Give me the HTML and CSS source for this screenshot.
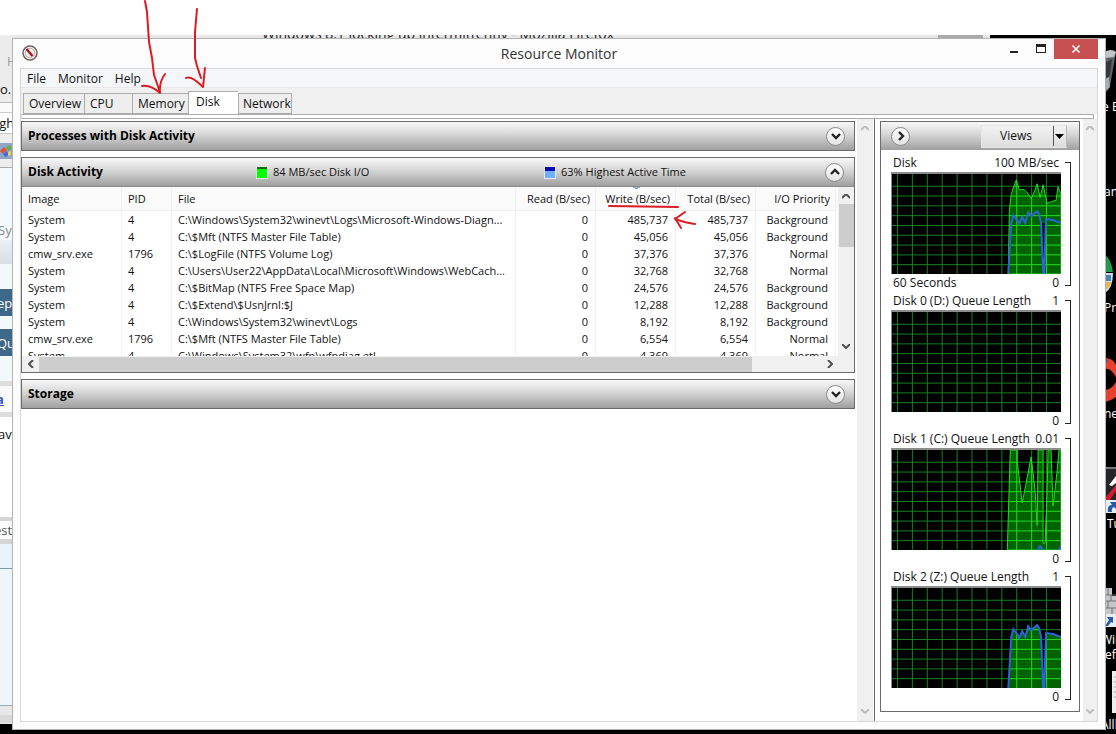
FILE: index.html
```html
<!DOCTYPE html>
<html lang="en">
<head>
<meta charset="utf-8">
<title>Resource Monitor</title>
<link rel="stylesheet" href="styles.css">
</head>
<body>
<svg class="defs" width="0" height="0" aria-hidden="true">
  <defs>
    <path id="area-io" d="M117 102L118 38 120 20 125 6 128 16 133 16 137 20 140 25 144 16 146 10 149 24 152 11 156 30 161 28 165 27 167 13 170 20V102Z"/>
    <path id="area-active" d="M117 102L120 50 122 42 126 47 128 51 131 44 134 50 137 39 140 43 142 41 146 38 148 41 150 50 151 102H153L155 46 162 47 170 50V102Z"/>
    <path id="line-active" d="M117 102L120 50 122 42 126 47 128 51 131 44 134 50 137 39 140 43 142 41 146 38 148 41 150 50 152 102 153 102 155 46 162 47 170 50"/>
    <path id="area-queue" d="M116 102L119 0H126V12L131 54 140 7 144 42 146 77 147 0H152V95H154L156 42 157 0H160L162 57 166 22 168 0H170V102Z"/>
    <path id="grid" d="M5.500 0V102M20.500 0V102M35.500 0V102M50.500 0V102M65.500 0V102M80.500 0V102M95.500 0V102M110.500 0V102M125.500 0V102M140.500 0V102M155.500 0V102M0 12.500H170M0 22.500H170M0 32.500H170M0 42.500H170M0 52.500H170M0 62.500H170M0 72.500H170M0 82.500H170M0 92.500H170"/>
    <clipPath id="clip-io"><use href="#area-io"/></clipPath>
    <clipPath id="clip-active"><use href="#area-active"/></clipPath>
    <clipPath id="clip-queue"><use href="#area-queue"/></clipPath>
    <path id="chev-down" d="M0 0L4 4 8 0"/>
    <path id="chev-up" d="M0 4L4 0 8 4"/>
  </defs>
</svg>
<div class="blank-strip"></div>
<div class="desktop">
  <div class="browser">
    <div class="browser-title">Windows 8.1 locking up intermittently - Mozilla Firefox</div>
    <div class="browser-button"></div>
    <div class="browser-edge">
      <div class="edge chrome"><span class="faint">H</span><span>o.</span></div>
      <div class="edge gap"></div>
      <div class="edge field">igh</div>
      <div class="edge tabs-row">
        <svg width="12" height="16"><rect width="12" height="16" fill="#91a5cb"/><path d="M0 8l4-4 3 3-4 4z" fill="#e0503c"/><path d="M6 4l4-2 2 4-4 2z" fill="#63b04d"/><path d="M3 11l4-3 2 4-4 2z" fill="#3f6fd2"/><path d="M8 9l3-1v4l-3 1z" fill="#f1cf4a"/></svg>
      </div>
      <div class="edge page-top">Sy</div>
      <div class="edge fade"></div>
      <div class="edge pale"></div>
      <div class="edge blue">ep</div>
      <div class="edge spacer"></div>
      <div class="edge blue">Qu</div>
      <div class="edge pale"></div>
      <div class="edge tool"><a href="#">a</a></div>
      <div class="edge editor">av</div>
      <div class="edge quote">est</div>
      <div class="edge box"></div>
      <div class="edge rest"></div>
      <div class="edge foot"></div>
    </div>
  </div>
  <svg class="desktop-icons" width="11" height="699" aria-hidden="true">
    <path d="M0 17Q6 14 11 17L5 51Q3 57 0 57Z" fill="#5d6167"/><path d="M0 17Q6 13 11 17L9 22 0 23Z" fill="#bfc4c9"/><path d="M0 28L7 24 5 40 0 46Z" fill="#34383e"/><path d="M0 44l4-2 1 10-5 4z" fill="#a8acb1"/>
    <path d="M0 220Q6 224 8 237H0Z" fill="#1f9c4b"/><path d="M0 238H8Q8 253 0 258Z" fill="#d7dde2"/><path d="M0 240h6v6H0z" fill="#4385b7"/><path d="M0 247h6q-1 6-6 8z" fill="#e8b34e"/>
    <path d="M0 323Q8 323 11 330V342Q5 332 0 334ZM0 355Q6 355 11 347V362Q6 366 0 367Z" fill="#e5412e"/><circle cx="1" cy="326" r="2" fill="#536070"/>
    <rect y="432" width="11" height="33" fill="#242529"/><path d="M0 432h11v2H0z" fill="#777"/><path d="M4 450L11 441V448L7 451Z" fill="#fff"/><path d="M0 463L11 450V456L5 465H0Z" fill="#d5182e"/>
    <rect y="465" width="11" height="13" fill="#e8edf4"/><path d="M3 477Q2 470 7 470L5 467H11V474L9 472Q6 473 7 477Z" fill="#225ba8"/>
    <path d="M0 553H7V561H11V579H0Z" fill="#c4c7cb"/><path d="M0 560H11M0 566H11M0 573H11M3 553V560M6 560V566M3 566V573M7 573V579" stroke="#6d7076" fill="none"/>
    <rect y="579" width="11" height="13" fill="#e8edf4"/><path d="M0 591L4 585 2 582H8V588L6 587 3 591Z" fill="#225ba8"/>
    <rect x="7" y="636" width="4" height="42" fill="#eee"/><path d="M9 642H11M9 647H11M9 652H11M9 657H11M9 662H11" stroke="#aaa"/>
    <g class="icon-label"><text x="-6" y="76">le E</text><text x="-1" y="161">an</text><text x="-1" y="277">Pro</text><text x="-1" y="383">ne</text><text x="2" y="493">Tu</text><text x="-4" y="609">Win</text><text x="0" y="624">ef</text><text x="-4" y="694">Alll</text></g>
  </svg>

  <main class="window">
    <header class="titlebar">
      <svg class="app-icon" width="16" height="16" viewBox="0 0 16 16"><circle cx="8" cy="8" r="7" fill="#fff" stroke="#6d625e" stroke-width="1.500"/><circle cx="8" cy="8" r="4.800" fill="#f4eded" stroke="#b9aaa7"/><path d="M4.500 4L10.500 11" stroke="#a41d25" stroke-width="2.500"/></svg>
      <h1>Resource Monitor</h1>
      <div class="window-controls">
        <button type="button" aria-label="Minimize"><svg width="10" height="10"><path d="M1 8H9" stroke="#222" stroke-width="2"/></svg></button>
        <button type="button" aria-label="Maximize"><svg width="10" height="10"><path d="M0 1.500H10" stroke="#222" stroke-width="3"/><rect x=".5" y=".5" width="9" height="8" fill="none" stroke="#222"/></svg></button>
        <button type="button" class="close" aria-label="Close"><svg width="10" height="10"><path d="M1.500 1.500L8.500 8.500M8.500 1.500L1.500 8.500" stroke="#fff" stroke-width="1.600"/></svg></button>
      </div>
    </header>
    <div class="client">
      <nav class="menubar"><button type="button">File</button><button type="button">Monitor</button><button type="button">Help</button></nav>
      <div class="tabbar" role="tablist">
        <button type="button" role="tab" class="tab w-overview">Overview</button>
        <button type="button" role="tab" class="tab w-cpu">CPU</button>
        <button type="button" role="tab" class="tab w-memory">Memory</button>
        <button type="button" role="tab" class="tab w-disk selected" aria-selected="true">Disk</button>
        <button type="button" role="tab" class="tab w-network">Network</button>
      </div>
      <div class="tab-edge"></div>
      <div class="panes">
        <section class="main-pane">
          <article class="panel">
            <div class="panel-head"><h2>Processes with Disk Activity</h2><button type="button" class="round" aria-label="Expand processes"><svg width="20" height="20"><use href="#chev-down" x="6" y="8"/></svg></button></div>
          </article>
          <article class="panel">
            <div class="panel-head with-legend">
              <h2>Disk Activity</h2>
              <span class="legend"><i class="swatch green"></i>84 MB/sec Disk I/O</span>
              <span class="legend"><i class="swatch navy"></i>63% Highest Active Time</span>
              <button type="button" class="round" aria-label="Collapse disk activity"><svg width="20" height="20"><use href="#chev-up" x="6" y="8"/></svg></button>
            </div>
            <div class="table-area">
              <div class="table-clip">
                <table>
                  <colgroup><col class="c-image"><col class="c-pid"><col><col class="c-num"><col class="c-num"><col class="c-num"><col class="c-num"></colgroup>
                  <thead><tr><th>Image</th><th>PID</th><th>File</th><th class="num">Read (B/sec)</th><th class="num sorted">Write (B/sec)</th><th class="num">Total (B/sec)</th><th class="num">I/O Priority</th></tr></thead>
                  <tbody>
                    <tr><td>System</td><td>4</td><td>C:\Windows\System32\winevt\Logs\Microsoft-Windows-Diagn...</td><td>0</td><td>485,737</td><td>485,737</td><td>Background</td></tr>
                    <tr><td>System</td><td>4</td><td>C:\$Mft (NTFS Master File Table)</td><td>0</td><td>45,056</td><td>45,056</td><td>Background</td></tr>
                    <tr><td>cmw_srv.exe</td><td>1796</td><td>C:\$LogFile (NTFS Volume Log)</td><td>0</td><td>37,376</td><td>37,376</td><td>Normal</td></tr>
                    <tr><td>System</td><td>4</td><td>C:\Users\User22\AppData\Local\Microsoft\Windows\WebCach...</td><td>0</td><td>32,768</td><td>32,768</td><td>Normal</td></tr>
                    <tr><td>System</td><td>4</td><td>C:\$BitMap (NTFS Free Space Map)</td><td>0</td><td>24,576</td><td>24,576</td><td>Background</td></tr>
                    <tr><td>System</td><td>4</td><td>C:\$Extend\$UsnJrnl:$J</td><td>0</td><td>12,288</td><td>12,288</td><td>Background</td></tr>
                    <tr><td>System</td><td>4</td><td>C:\Windows\System32\winevt\Logs</td><td>0</td><td>8,192</td><td>8,192</td><td>Background</td></tr>
                    <tr><td>cmw_srv.exe</td><td>1796</td><td>C:\$Mft (NTFS Master File Table)</td><td>0</td><td>6,554</td><td>6,554</td><td>Normal</td></tr>
                    <tr><td>System</td><td>4</td><td>C:\Windows\System32\wfp\wfpdiag.etl</td><td>0</td><td>4,369</td><td>4,369</td><td>Normal</td></tr>
                  </tbody>
                </table>
              </div>
              <div class="vscroll inner">
                <svg width="8" height="5"><use href="#chev-up"/></svg><i class="thumb"></i><svg width="8" height="5"><use href="#chev-down"/></svg>
              </div>
              <div class="hscroll">
                <svg width="6" height="8"><path d="M5 0L1 4 5 8"/></svg><div class="track"><i class="thumb"></i></div><svg width="6" height="8"><path d="M1 0L5 4 1 8"/></svg>
              </div>
            </div>
          </article>
          <article class="panel">
            <div class="panel-head"><h2>Storage</h2><button type="button" class="round" aria-label="Expand storage"><svg width="20" height="20"><use href="#chev-down" x="6" y="8"/></svg></button></div>
          </article>
        </section>
        <div class="vscroll idle"><svg width="8" height="5"><use href="#chev-up"/></svg><svg width="8" height="5"><use href="#chev-down"/></svg></div>
        <aside class="graph-pane">
          <div class="panel graphs">
            <div class="panel-head graph-head">
              <button type="button" class="round" aria-label="Hide graphs"><svg width="20" height="20"><path d="M8 6L12 10 8 14"/></svg></button>
              <button type="button" class="views"><span>Views</span><svg width="14" height="20"><path d="M1.500 0V20" stroke="#555"/><path d="M3 8H12L7.500 13Z" fill="#000"/></svg></button>
            </div>
            <div class="graph-list">
              <figure class="graph">
                <figcaption><span>Disk</span><span>100 MB/sec</span></figcaption>
                <svg class="plot" viewBox="0 0 170 102" preserveAspectRatio="none"><use href="#grid" class="grid"/><use href="#area-io" class="area"/><g clip-path="url(#clip-io)"><use href="#grid" class="grid lit"/></g><path d="M150 50L151 102H153L155 50Z" fill="#00210a"/><use href="#area-io" class="edge-line"/><use href="#line-active" class="active"/></svg>
                <div class="scale"><span>60 Seconds</span><span>0</span></div><i class="bracket"></i>
              </figure>
              <figure class="graph">
                <figcaption><span>Disk 0 (D:) Queue Length</span><span>1</span></figcaption>
                <svg class="plot" viewBox="0 0 170 102" preserveAspectRatio="none"><use href="#grid" class="grid"/></svg>
                <div class="scale"><span></span><span>0</span></div><i class="bracket"></i>
              </figure>
              <figure class="graph">
                <figcaption><span>Disk 1 (C:) Queue Length</span><span>0.01</span></figcaption>
                <svg class="plot" viewBox="0 0 170 102" preserveAspectRatio="none"><use href="#grid" class="grid"/><use href="#area-queue" class="area"/><g clip-path="url(#clip-queue)"><use href="#grid" class="grid lit"/></g><use href="#area-queue" class="edge-line"/><path class="active" d="M146 102L149 98 152 102M168 102L170 98"/></svg>
                <div class="scale"><span></span><span>0</span></div><i class="bracket"></i>
              </figure>
              <figure class="graph">
                <figcaption><span>Disk 2 (Z:) Queue Length</span><span>1</span></figcaption>
                <svg class="plot" viewBox="0 0 170 102" preserveAspectRatio="none"><use href="#grid" class="grid"/><use href="#area-active" class="area"/><g clip-path="url(#clip-active)"><use href="#grid" class="grid lit"/></g><use href="#line-active" class="active"/></svg>
                <div class="scale"><span></span><span>0</span></div><i class="bracket"></i>
              </figure>
            </div>
          </div>
          <div class="vscroll idle"><svg width="8" height="5"><use href="#chev-up"/></svg><svg width="8" height="5"><use href="#chev-down"/></svg></div>
        </aside>
      </div>
    </div>
  </main>
</div>
<svg class="annotations" width="720" height="240" aria-hidden="true">
  <path d="M145 1L147 12 149 42 152 58 154 75 160 92M142 86Q150 84 160 93Q159 82 165 74"/>
  <path d="M197 9L195 32 195 58 197 66 201 78M186 78Q191 75 203 87L205 68"/>
  <path d="M609 206L678 207M695 224Q686 223 675 219L685 212M675 218L681 228"/>
</svg>
</body>
</html>
```
FILE: styles.css
```css
* { box-sizing: border-box; }
body {
  margin: 0;
  min-height: 100vh;
  display: flex;
  flex-direction: column;
  position: relative;
  background: #000;
  color: #111;
  font: 12px/16px "Open Sans", "Noto Sans", sans-serif;
}
button { font: inherit; color: inherit; margin: 0; padding: 0; border: 0; background: none; }
h1, h2, figure { margin: 0; }
svg { display: block; }
.defs { position: absolute; }
.blank-strip { height: 35px; background: #fff; }

/* desktop behind the window */
.desktop { flex: 1; display: flex; flex-direction: column; position: relative; overflow: hidden; padding: 3px 10px 4px 12px; }
.browser { position: absolute; top: 0; left: 0; right: 126px; bottom: 10px; background: #e8e8e8; }
.browser-title { position: absolute; left: 262px; top: -11px; font-size: 14px; line-height: 20px; white-space: nowrap; color: #222; }
.browser-button { position: absolute; right: 7px; top: 0; width: 45px; height: 4px; background: #aaa; }
.browser-edge { width: 12px; font-size: 13px; }
.edge { overflow: hidden; display: flex; flex-direction: column; justify-content: center; white-space: nowrap; }
.chrome { height: 68px; background: #ececec; border-bottom: 1px solid #bbb; justify-content: flex-end; gap: 12px; padding-bottom: 5px; }
.faint { color: #999; padding-left: 7px; }
.gap { height: 9px; background: #fafafa; }
.field { height: 22px; background: #fff; border: 1px solid #ccc; border-width: 1px 0; text-indent: -4px; }
.tabs-row { height: 34px; background: #ededed; border-bottom: 1px solid #aaa; }
.page-top { height: 72px; background: #f3f9fc; color: #888; justify-content: flex-end; padding-bottom: 2px; text-indent: -2px; }
.fade { height: 24px; background: linear-gradient(#eaf0f3, #d8e0e5); }
.pale { height: 25px; background: #f3f8fb; }
.blue { height: 27px; background: #3f6787; color: #fff; text-indent: -3px; }
.spacer { height: 13px; background: #f3f8fb; }
.tool { height: 36px; background: #fafafa; border-top: 5px solid #ddd; border-bottom: 5px solid #ddd; }
.tool a { color: #3a4fc4; font-weight: bold; margin-left: -4px; }
.editor { height: 104px; background: #fff; border-bottom: 4px solid #d4d4d4; justify-content: flex-start; padding-top: 9px; text-indent: -2px; }
.quote { height: 23px; background: #fbfbfb; border-bottom: 5px solid #d4d4d4; color: #555; text-indent: -6px; }
.box { height: 25px; background: #e9f2f9; border-bottom: 1px solid #7f99ab; }
.rest { height: 137px; background: #eff6fb; border-bottom: 1px solid #9ab; }
.foot { height: 17px; background: #e6e8ea; border-bottom: 8px solid #d9d9d9; }
.desktop-icons { position: absolute; right: 0; top: 0; overflow: hidden; }
.icon-label { fill: #fff; font-size: 12px; }

/* window frame */
.window {
  position: relative;
  flex: 1;
  display: flex;
  flex-direction: column;
  padding: 0 7px 7px;
  background: #fcfcfc;
  border: 1px solid #b4b4b4;
}
.titlebar { display: grid; grid-template-columns: 1fr auto 1fr; height: 29px; }
.app-icon { margin: 6px 0 0 2px; }
h1 { font-size: 14px; font-weight: 400; line-height: 30px; color: #333; }
.window-controls { display: flex; justify-content: flex-end; align-items: flex-start; }
.window-controls button { width: 27px; height: 20px; display: flex; align-items: center; justify-content: center; }
.window-controls .close { width: 44px; background: #c75050; }
.client { flex: 1; display: flex; flex-direction: column; border: 1px solid #d5d7d9; background: #fff; }
.menubar { height: 19px; display: flex; align-items: center; gap: 12px; padding: 2px 0 0 6px; background: #f5f6f7; border-bottom: 1px solid #e8e8ea; }
.tabbar { height: 26px; display: flex; align-items: flex-end; padding-left: 2px; background: #f0f0f0; }
.tab { height: 21px; padding-left: 5px; text-align: left; border: 1px solid #acacac; border-right-width: 0; background: #eee; }
.tab:last-child { border-right-width: 1px; }
.tab.selected { height: 23px; padding: 0 0 2px 7px; background: #fff; border-bottom: 0; }
.w-overview { width: 61px; }
.w-cpu { width: 48px; }
.w-memory { width: 56px; }
.w-disk { width: 50px; }
.w-network { width: 54px; padding-left: 4px; }
.tab-edge { height: 5px; margin-right: 3px; border: 1px solid #acacac; border-left-color: #ddd; }

/* panes */
.panes { flex: 1; display: flex; }
.main-pane { flex: 1; min-width: 0; padding: 2px 2px 0 0; display: flex; flex-direction: column; gap: 6px; }
.panel { border: 1px solid #6b6b6b; background: #fff; }
.panel-head {
  height: 28px;
  display: flex;
  align-items: center;
  justify-content: space-between;
  padding: 0 9px 0 6px;
  background: linear-gradient(#f8f8f8, #dadada 40%, #9f9f9f);
}
.with-legend { display: grid; grid-template-columns: 228px 288px 1fr 20px; }
h2 { font-size: 12px; font-weight: 700; line-height: 18px; color: #000; }
.legend { display: flex; align-items: center; gap: 5px; white-space: nowrap; font-size: 11px; }
.swatch { width: 12px; height: 13px; border: 1px solid #e8e8e8; }
.green { background: linear-gradient(#146b14 2px, #0f0 2px); }
.navy { background: linear-gradient(#0a0ab4 4px, #6fb0ff 4px); }
.round {
  width: 19px;
  height: 19px;
  border-radius: 50%;
  border: 1px solid #8a8a8a;
  background: linear-gradient(#fff, #e2e2e2);
  display: flex;
  align-items: center;
  justify-content: center;
}
.round svg { flex: none; fill: none; stroke: #222; stroke-width: 2.400; }

/* disk activity table */
.table-area { display: grid; grid-template-columns: 1fr 16px; border-top: 1px solid #8a8a8a; font-size: 11px; }
.table-clip { height: 169px; overflow: hidden; padding-right: 2px; background: linear-gradient(#fbfbfc 23px, #fff 23px); }
table { width: 100%; table-layout: fixed; border-collapse: separate; border-spacing: 0; }
.c-image { width: 100px; }
.c-pid { width: 50px; }
.c-num { width: 80px; }
th { height: 24px; padding: 0 6px; text-align: left; font-weight: 400; border-bottom: 1px solid #eceef0; }
th, td { border-right: 1px solid #edf2f6; white-space: nowrap; overflow: hidden; }
.num { text-align: right; padding: 0 5px 0 0; }
.sorted { background: linear-gradient(#7fb2cc, #7fb2cc) 37px 0 / 7px 1px no-repeat, linear-gradient(#7fb2cc, #7fb2cc) 39px 1px / 3px 1px no-repeat; }
td { height: 17px; line-height: 17px; padding: 0 6px; }
td:nth-child(n+4) { text-align: right; padding: 0 7px 0 0; }
.vscroll { width: 16px; display: flex; flex-direction: column; align-items: center; justify-content: space-between; padding: 7px 0; background: #f0f0f0; }
.vscroll svg, .hscroll svg { fill: none; stroke: #505050; stroke-width: 2; flex: none; }
.vscroll.idle svg { stroke: #bdbdbd; }
.inner { justify-content: flex-start; }
.inner .thumb { width: 15px; height: 43px; margin: 5px 0 auto; background: #cdcdcd; }
.hscroll { grid-column: 1 / -1; height: 16px; display: flex; align-items: center; padding: 0 21px 0 6px; gap: 5px; background: #f0f0f0; }
.track { flex: 1; height: 15px; }
.hscroll .thumb { display: block; width: 91%; height: 15px; background: #cdcdcd; }

/* graphs */
.graph-pane { display: flex; gap: 3px; border-left: 1px solid #666; margin-left: 1px; padding-left: 5px; }
.graph-pane .vscroll { width: 14px; }
.graphs { width: 200px; margin: 2px 0 9px; }
.graph-head { padding: 0 12px 0 10px; }
.views { width: 86px; height: 23px; display: flex; align-items: center; border: 1px solid #e6e6e6; border-right-color: #b8b8b8; background: linear-gradient(#f2f2f2, #dedede); }
.views span { flex: 1; text-align: center; padding-right: 2px; }
.graph-list { padding: 4px 8px 4px 10px; }
.graph { position: relative; padding-right: 10px; }
figcaption, .scale { height: 18px; display: flex; justify-content: space-between; align-items: center; padding: 0 2px; }
.plot { width: 100%; height: 102px; background: #000; border: 2px solid #8c8c8c; border-width: 2px 0 0 1px; }
.bracket { position: absolute; right: 0; top: 8px; width: 6px; height: 124px; border: 1px solid #222; border-left: 0; }
.grid { fill: none; stroke: #168224; stroke-width: 1; }
.lit { stroke: #22e022; }
.area { fill: #006200; }
.edge-line { fill: none; stroke: #1ee01e; stroke-width: 1; }
.active { fill: none; stroke: #2e63d8; stroke-width: 2; }

.annotations { position: absolute; left: 0; top: 0; pointer-events: none; fill: none; stroke: #dc1c24; stroke-width: 2; stroke-linecap: round; stroke-linejoin: round; }
```
